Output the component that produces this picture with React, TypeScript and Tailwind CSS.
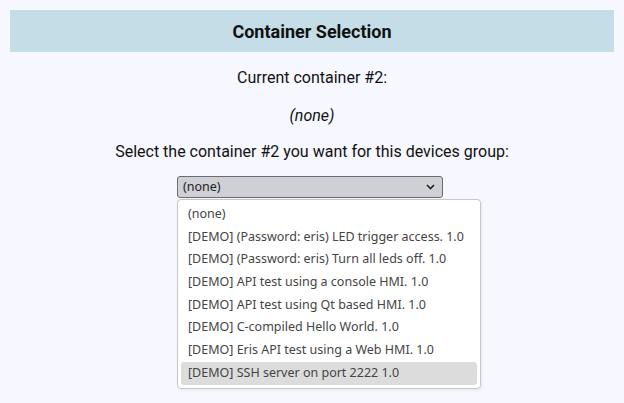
const options = [
  '(none)',
  '[DEMO] (Password: eris) LED trigger access. 1.0',
  '[DEMO] (Password: eris) Turn all leds off. 1.0',
  '[DEMO] API test using a console HMI. 1.0',
  '[DEMO] API test using Qt based HMI. 1.0',
  '[DEMO] C-compiled Hello World. 1.0',
  '[DEMO] Eris API test using a Web HMI. 1.0',
  '[DEMO] SSH server on port 2222 1.0',
];

export default function App() {
  return (
    <div className="min-h-[403px] bg-[#f6f7ff] p-[10px] font-['Roboto',sans-serif] text-[#111]">
      <div className="flex h-[42px] items-center justify-center bg-[#c4dde6] text-[18px] font-bold">
        Container Selection
      </div>
      <div className="flex flex-col items-center">
        <p className="mt-[14px] text-[16px]">Current container #2:</p>
        <p className="mt-[14px] text-[16px] italic">(none)</p>
        <p className="mt-[12px] text-[16px]">Select the container #2 you want for this devices group:</p>
        <div className="relative mt-[12px] ml-[-4px]">
          <div className="flex h-[22px] w-[266px] items-center justify-between rounded-[3px] border border-[#6b6b70] bg-[#cfd0d6] pl-[5px] pr-[7px] font-['Noto_Sans',sans-serif] text-[12.5px] text-[#222]">
            <span>(none)</span>
            <svg width="9" height="6" viewBox="0 0 9 6" fill="none" stroke="#222" strokeWidth="1.6">
              <path d="M1 1l3.5 3.5L8 1" />
            </svg>
          </div>
          <div className="absolute left-0 top-[23px] z-10 w-[304px] rounded-[4px] border border-[#c8c8c8] bg-white p-[3px] shadow-[1px_1px_3px_rgba(0,0,0,0.08)] font-['Noto_Sans',sans-serif] text-[12.5px] text-[#444]">
            {options.map((o, i) => (
              <div
                key={o}
                className={`flex h-[22.7px] items-center rounded-[3px] px-[7px] ${i === options.length - 1 ? 'bg-[#dcdcdc]' : ''}`}
              >
                {o}
              </div>
            ))}
          </div>
        </div>
      </div>
    </div>
  );
}
